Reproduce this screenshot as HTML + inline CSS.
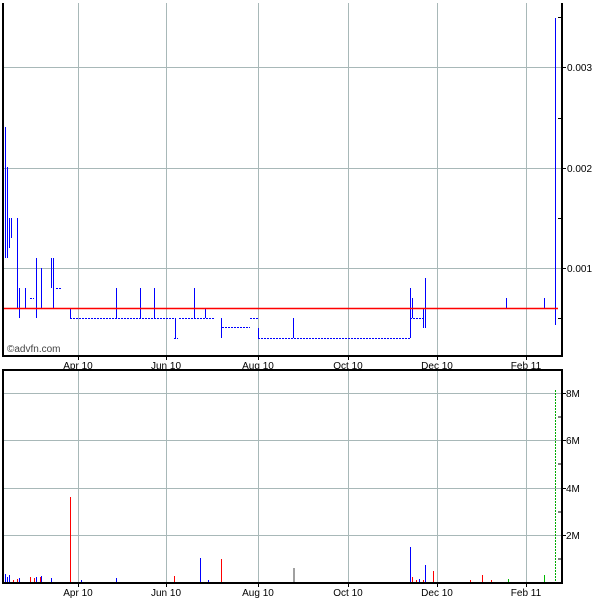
<!DOCTYPE html>
<html><head><style>
html,body{margin:0;padding:0;background:#fff;}
svg{display:block;font-family:"Liberation Sans",sans-serif;font-size:10px;}
</style></head><body>
<svg width="600" height="600" viewBox="0 0 600 600" xmlns="http://www.w3.org/2000/svg">
<g stroke="#a8b8b8" stroke-width="1">
<line x1="3" y1="67.5" x2="562" y2="67.5"/><line x1="3" y1="168.5" x2="562" y2="168.5"/><line x1="3" y1="268.5" x2="562" y2="268.5"/>
<line x1="3" y1="393.5" x2="562" y2="393.5"/><line x1="3" y1="440.5" x2="562" y2="440.5"/><line x1="3" y1="488.5" x2="562" y2="488.5"/><line x1="3" y1="535.5" x2="562" y2="535.5"/>
<g>
<line x1="78.5" y1="3" x2="78.5" y2="356"/><line x1="166.5" y1="3" x2="166.5" y2="356"/><line x1="258.5" y1="3" x2="258.5" y2="356"/><line x1="348.5" y1="3" x2="348.5" y2="356"/><line x1="437.5" y1="3" x2="437.5" y2="356"/><line x1="526.5" y1="3" x2="526.5" y2="356"/>
<line x1="78.5" y1="370" x2="78.5" y2="583"/><line x1="166.5" y1="370" x2="166.5" y2="583"/><line x1="258.5" y1="370" x2="258.5" y2="583"/><line x1="348.5" y1="370" x2="348.5" y2="583"/><line x1="437.5" y1="370" x2="437.5" y2="583"/><line x1="526.5" y1="370" x2="526.5" y2="583"/>
</g></g>
<!-- price -->
<g stroke="#0000ff" stroke-width="1" fill="none">
<path d="M70 318.5H175 M174 338.5H178 M179 318.5H215 M215 308.5H222 M222 327.5H250 M250 318.5H258 M258 338.5H410 M410 318.5H425 M425 308.5H558 M56 288.5H62 M30 298.5H34" stroke-dasharray="2 1"/>
<path d="M5.5 127V258 M7.5 167V258 M9.5 218V248 M11.5 218V238 M17.5 218V308 M19.5 288V318 M25.5 288V308 M36.5 258V318 M41.5 268V308 M51.5 258V288 M53.5 258V308 M70.5 308V318 M116.5 288V318 M140.5 288V318 M154.5 288V318 M175.5 318V338 M194.5 288V318 M205.5 308V318 M221.5 318V338 M258.5 328V338 M293.5 318V338 M410.5 288V338 M412.5 298V318 M423.5 308V328 M425.5 278V328 M506.5 298V308 M544.5 298V308 M555.5 18V325"/>
</g>
<line x1="3" y1="308.5" x2="558" y2="308.5" stroke="#ff0000" stroke-width="1.5"/>
<!-- volume -->
<g stroke-width="1">
<path stroke="#0000ff" d="M5.5 574V582 M7.5 577V582 M9.5 575V582 M19.5 578V582 M36.5 577V582 M41.5 576V582 M51.5 578V582 M81.5 580V582 M116.5 578V582 M200.5 558V582 M208.5 580V582 M410.5 547V582 M425.5 565V582 M419.5 579V582"/>
<path stroke="#ff0000" d="M13.5 580V582 M17.5 579V582 M30.5 577V582 M34.5 578V582 M40.5 577V582 M70.5 497V582 M174.5 576V582 M221.5 559V582 M412.5 577V582 M416.5 580V582 M423.5 580V582 M433.5 571V582 M470.5 580V582 M482.5 575V582 M491.5 580V582"/>
<path stroke="#00bb00" d="M508.5 579V582 M544.5 575V582"/>
<path stroke="#00aa00" stroke-dasharray="2 1" d="M555.5 390V582"/>
<path stroke="#a0a0a0" d="M293.5 568V582 M294.5 568V582"/>
</g>
<!-- frames -->
<g stroke="#000" stroke-width="2" fill="none">
<path d="M3 3V356H562V3"/>
<path d="M3 370H562V583H3Z"/>
</g>
<g stroke="#000" stroke-width="1">
<path d="M562 67.5h4 M562 168.5h4 M562 268.5h4 M558 118.5h4 M558 218.5h4 M558 318.5h4 M558 17.5h4"/>
<path d="M562 393.5h4 M562 440.5h4 M562 488.5h4 M562 535.5h4 M558 417h4 M558 464h4 M558 512h4 M558 559h4"/>
<path d="M78.5 356v4 M166.5 356v4 M258.5 356v4 M348.5 356v4 M437.5 356v4 M526.5 356v4 M78.5 583v4 M166.5 583v4 M258.5 583v4 M348.5 583v4 M437.5 583v4 M526.5 583v4"/>
</g>
<g fill="#000">
<text x="567" y="71">0.003</text><text x="567" y="172">0.002</text><text x="567" y="272">0.001</text>
<text x="566" y="397">8M</text><text x="566" y="444">6M</text><text x="566" y="492">4M</text><text x="566" y="539">2M</text>
<g text-anchor="middle">
<text x="78" y="369">Apr 10</text><text x="166" y="369">Jun 10</text><text x="258" y="369">Aug 10</text><text x="348" y="369">Oct 10</text><text x="437" y="369">Dec 10</text><text x="526" y="369">Feb 11</text>
<text x="78" y="596">Apr 10</text><text x="166" y="596">Jun 10</text><text x="258" y="596">Aug 10</text><text x="348" y="596">Oct 10</text><text x="437" y="596">Dec 10</text><text x="526" y="596">Feb 11</text>
</g>
<text x="7" y="352" fill="#444">©advfn.com</text>
</g>
</svg>
</body></html>
